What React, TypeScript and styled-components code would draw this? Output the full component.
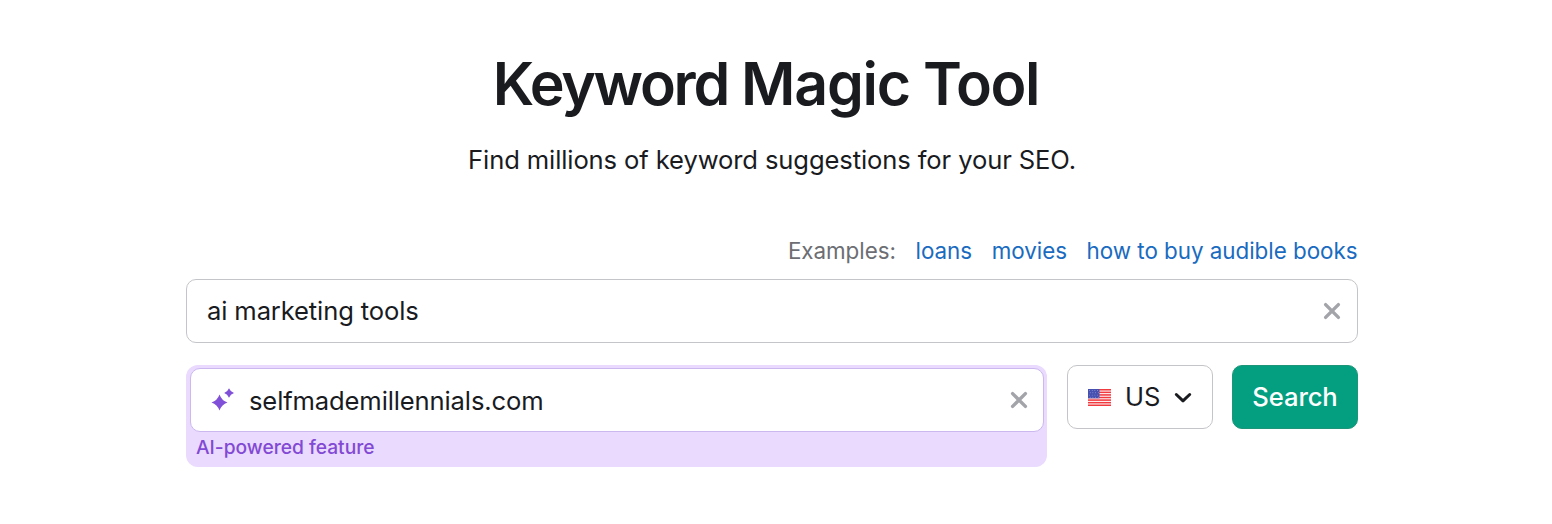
import React from "react";
import styled, { createGlobalStyle } from "styled-components";

const GlobalStyle = createGlobalStyle`
  *, *::before, *::after { box-sizing: border-box; }
  body {
    margin: 0;
    background: #fff;
    color: #191b1f;
    font-family: Inter, "Liberation Sans", sans-serif;
  }
`;

const Page = styled.main`
  width: 1552px;
  height: 524px;
  padding: 50px 194px 0 186px;
  display: flex;
  flex-direction: column;
  overflow: hidden;
`;

const Title = styled.h1`
  margin: 0;
  height: 68px;
  padding-right: 12px;
  text-align: center;
  white-space: nowrap;
  font: 600 59px/68px Inter, sans-serif;
  letter-spacing: -1.8px;
`;

const Word = styled.span<{ $tracking: number }>`
  letter-spacing: ${(p) => p.$tracking}px;
`;

const Subtitle = styled.p`
  margin: 24px 0 0;
  text-align: center;
  font-size: 25.6px;
  line-height: 36px;
  letter-spacing: -0.12px;
`;

const Examples = styled.div`
  display: flex;
  justify-content: flex-end;
  gap: 19.6px;
  margin-top: 57px;
  padding-right: 0.5px;
  font-size: 22.4px;
  line-height: 32px;
  letter-spacing: -0.03px;
  color: #6c6e73;
  white-space: nowrap;
`;

const ExampleLink = styled.a`
  color: #1a6bc0;
`;

const Field = styled.div<{ $accent?: boolean }>`
  display: flex;
  align-items: center;
  height: 64px;
  padding: 0 15px 0 20px;
  border: 1px solid ${(p) => (p.$accent ? "#cbb8ee" : "#c4c5c9")};
  border-radius: 10px;
  background: #fff;
  font-size: 25.6px;
`;

const FieldText = styled.span`
  flex: 1;
  white-space: nowrap;
  letter-spacing: -0.14px;
`;

const KeywordField = styled(Field)`
  margin-top: 12px;
  line-height: 30px;
  padding-bottom: 1px;
`;

const AiField = styled(Field)`
  padding-right: 14px;
`;

const Controls = styled.div`
  display: flex;
  align-items: flex-start;
  margin-top: 22px;
`;

const AiBox = styled.section`
  width: 861px;
  height: 102px;
  padding: 3px 3px 0 4px;
  border-radius: 12px;
  background: #e9dafe;
`;

const AiLabel = styled.div`
  padding-left: 6px;
  font-size: 19.2px;
  line-height: 31px;
  font-weight: 500;
  color: #8249d4;
`;

const SparkleSlot = styled.span`
  display: flex;
  width: 38px;
`;

const CountrySelect = styled(Field)`
  width: 146px;
  margin-left: 20px;
  padding-right: 20px;
  padding-bottom: 1px;
`;

const CountryName = styled.span`
  flex: 1;
  margin-left: 14px;
`;

const SearchButton = styled.button`
  width: 126px;
  height: 64px;
  margin-left: 19px;
  padding: 0;
  border: 1px solid #1c9579;
  border-radius: 10px;
  background: #049f80;
  color: #fff;
  font: 500 25.6px/62px Inter, sans-serif;
  letter-spacing: -0.1px;
`;

const ClearIcon = () => (
  <svg width="20" height="20" viewBox="0 0 20 20" fill="none" stroke="#a3a4a9" strokeWidth="3.4" strokeLinecap="round">
    <path d="M3.6 3.6 16.4 16.4M16.4 3.6 3.6 16.4" />
  </svg>
);

const Sparkles = () => (
  <svg width="26" height="26" viewBox="0 0 26 26" fill="#8150d8">
    <path d="M8.5 7.5Q10.7 13.6 16.5 15.6Q10.7 17.6 8.5 23.6Q6.3 17.6 .5 15.6Q6.3 13.6 8.5 7.5Z" />
    <path d="M18 1.2Q19.4 4.7 23 6Q19.4 7.3 18 10.8Q16.6 7.3 13.2 6Q16.6 4.7 18 1.2Z" />
  </svg>
);

const UsFlag = () => (
  <svg width="23" height="19" viewBox="0 -2 23 19">
    <rect width="23" height="17" fill="#fff" />
    {[0, 1, 2, 3, 4, 5, 6].map((i) => (
      <rect key={i} y={i * 2.58} width="23" height="1.55" fill="#f03a40" />
    ))}
    <rect width="11.5" height="9.3" fill="#4650b0" />
    {[1.5, 3.8, 6.1, 8.2].map((y, r) =>
      [1.5, 4.2, 6.9, 9.6].map((x) => (
        <circle key={`${x}-${y}`} cx={x + (r % 2) * 0.7} cy={y} r="0.45" fill="#b7bbe8" />
      ))
    )}
  </svg>
);

const Chevron = () => (
  <svg width="18" height="12" viewBox="0 0 18 12" fill="none" stroke="#191b1f" strokeWidth="3" strokeLinecap="round" strokeLinejoin="round">
    <path d="M2.3 3.5 9 9.8 15.7 3.5" />
  </svg>
);

export default function App() {
  return (
    <>
      <GlobalStyle />
      <Page>
        <Title>
          <Word $tracking={-2.3}>Keyword</Word> <Word $tracking={-1.2}>Magic</Word>{" "}
          <Word $tracking={-1.4}>Tool</Word>
        </Title>
        <Subtitle>Find millions of keyword suggestions for your SEO.</Subtitle>
        <Examples>
          <span>Examples:</span>
          <ExampleLink>loans</ExampleLink>
          <ExampleLink>movies</ExampleLink>
          <ExampleLink>how to buy audible books</ExampleLink>
        </Examples>
        <KeywordField>
          <FieldText>ai marketing tools</FieldText>
          <ClearIcon />
        </KeywordField>
        <Controls>
          <AiBox>
            <AiField $accent>
              <SparkleSlot>
                <Sparkles />
              </SparkleSlot>
              <FieldText>selfmademillennials.com</FieldText>
              <ClearIcon />
            </AiField>
            <AiLabel>AI-powered feature</AiLabel>
          </AiBox>
          <CountrySelect>
            <UsFlag />
            <CountryName>US</CountryName>
            <Chevron />
          </CountrySelect>
          <SearchButton>Search</SearchButton>
        </Controls>
      </Page>
    </>
  );
}
